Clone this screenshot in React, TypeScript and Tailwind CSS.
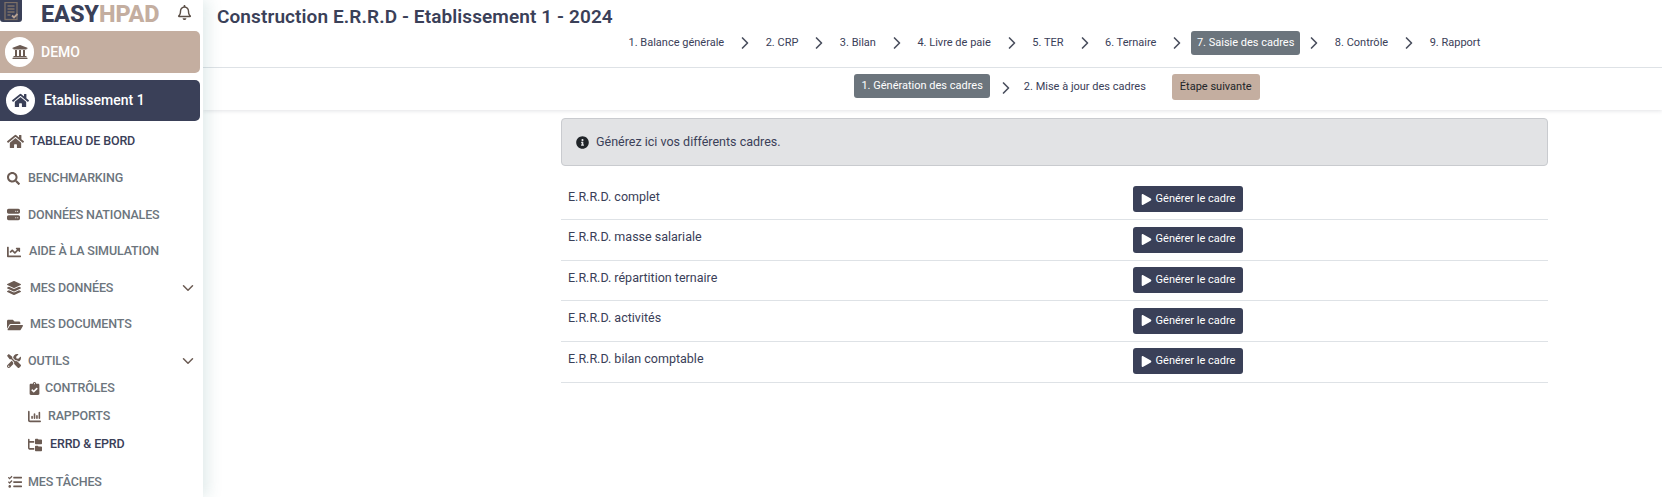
import { Fragment } from 'react';
import type { IconType } from 'react-icons';
import {
  FaChartLine,
  FaClipboardCheck,
  FaFolderOpen,
  FaHome,
  FaInfoCircle,
  FaLayerGroup,
  FaPlay,
  FaRegBell,
  FaSearch,
  FaTasks,
  FaTools,
  FaUniversity,
} from 'react-icons/fa';
import { FaChartColumn, FaFolderTree, FaServer } from 'react-icons/fa6';
import { LuChevronDown, LuChevronRight } from 'react-icons/lu';

const menu: Array<{ label: string; icon: IconType; size: number; gap: string; active?: boolean; open?: boolean }> = [
  { label: 'TABLEAU DE BORD', icon: FaHome, size: 17, gap: 'gap-[6px]', active: true },
  { label: 'BENCHMARKING', icon: FaSearch, size: 13, gap: 'gap-[8px]' },
  { label: 'DONNÉES NATIONALES', icon: FaServer, size: 13, gap: 'gap-[8px]' },
  { label: 'AIDE À LA SIMULATION', icon: FaChartLine, size: 14, gap: 'gap-[8px]' },
  { label: 'MES DONNÉES', icon: FaLayerGroup, size: 14, gap: 'gap-[9px]', open: true },
  { label: 'MES DOCUMENTS', icon: FaFolderOpen, size: 16, gap: 'gap-[7px]' },
  { label: 'OUTILS', icon: FaTools, size: 14, gap: 'gap-[7px]', open: true },
];

const subMenu: Array<{ label: string; icon: IconType; size: number; gap: string; active?: boolean }> = [
  { label: 'CONTRÔLES', icon: FaClipboardCheck, size: 13, gap: 'gap-[4px]' },
  { label: 'RAPPORTS', icon: FaChartColumn, size: 13, gap: 'gap-[7px]' },
  { label: 'ERRD & EPRD', icon: FaFolderTree, size: 14, gap: 'gap-[8px]', active: true },
];

const steps = ['1. Balance générale', '2. CRP', '3. Bilan', '4. Livre de paie', '5. TER', '6. Ternaire', '7. Saisie des cadres', '8. Contrôle', '9. Rapport'];
const cadres = ['E.R.R.D. complet', 'E.R.R.D. masse salariale', 'E.R.R.D. répartition ternaire', 'E.R.R.D. activités', 'E.R.R.D. bilan comptable'];

function Logo() {
  return (
    <div className="flex h-[22px] w-[22px] items-center justify-center rounded-b-[3px] bg-[#3a4058]">
      <svg width="15" height="19" viewBox="0 0 15 19" fill="none" stroke="#7d7067" strokeWidth="1.3">
        <rect x="1" y="0.5" width="12" height="17" />
        <path d="M3.5 4h7M3.5 7h7M3.5 10h7M3.5 13h3" />
        <path d="M8 13.5l2 2 3.5-3.5" stroke="#b9a395" strokeWidth="1.8" />
      </svg>
    </div>
  );
}

function Sidebar() {
  return (
    <aside className="relative z-10 h-full w-[203px] shrink-0 bg-white shadow-[5px_0_14px_rgba(70,130,130,0.16)]">
      <div className="flex h-[31px] items-start">
        <Logo />
        <div className="ml-[19px] w-[122px] text-[23.5px] leading-[28px] font-extrabold tracking-[-0.1px]">
          <span className="text-[#3a4058]">EASY</span>
          <span className="text-[#c4aea0]">HPAD</span>
        </div>
        <FaRegBell size={15} className="ml-[14px] mt-[5px] text-[#5c5048]" />
      </div>

      <div className="flex h-[42px] w-[200px] items-center rounded-r-[5px] bg-[#c4aea0] pl-[5px]">
        <div className="flex h-[30px] w-[29px] items-center justify-center rounded-full bg-white text-[#6b5b53]">
          <FaUniversity size={16} />
        </div>
        <span className="ml-[7px] text-[14px] font-medium text-white">DEMO</span>
      </div>

      <div className="mt-[7px] flex h-[41px] w-[200px] items-center rounded-r-[5px] bg-[#3a4058] pl-[6px]">
        <div className="flex h-[29px] w-[29px] items-center justify-center rounded-full bg-white text-[#3a4058]">
          <FaHome size={17} />
        </div>
        <span className="ml-[9px] text-[14px] font-medium text-white">Etablissement 1</span>
      </div>

      <nav className="pt-[2.5px]">
        {menu.map((m) => (
          <div key={m.label} className={`flex h-[36.6px] items-center pl-[7px] pr-[6px] ${m.gap}`}>
            <m.icon size={m.size} className="shrink-0 text-[#6b5b53]" />
            <span className={`text-[12.5px] font-medium tracking-[-0.15px] ${m.active ? 'text-[#3a4058]' : 'text-[#6c757d]'}`}>{m.label}</span>
            {m.open && <LuChevronDown size={18} className="ml-auto text-[#6b5b53]" />}
          </div>
        ))}
        <div className="-mt-[5px]">
          {subMenu.map((m) => (
            <div key={m.label} className={`flex h-[28px] items-center pl-[28px] ${m.gap}`}>
              <m.icon size={m.size} className="shrink-0 text-[#6b5b53]" />
              <span className={`text-[12.5px] font-medium tracking-[-0.15px] ${m.active ? 'text-[#3a4058]' : 'text-[#6c757d]'}`}>{m.label}</span>
            </div>
          ))}
        </div>
        <div className="mt-[5px] flex h-[36.6px] items-center gap-[6px] pl-[8px]">
          <FaTasks size={14} className="shrink-0 text-[#6b5b53]" />
          <span className="text-[12.5px] font-medium tracking-[-0.15px] text-[#6c757d]">MES TÂCHES</span>
        </div>
      </nav>
    </aside>
  );
}

function Header() {
  return (
    <header className="bg-white shadow-[0_1px_4px_rgba(60,64,88,0.15)]">
      <div className="h-[68px] border-b border-[#dee2e6]">
        <h1 className="pl-[14px] pt-[5px] text-[19px] leading-[24px] font-semibold tracking-[0.1px] text-[#3a4058]">Construction E.R.R.D - Etablissement 1 - 2024</h1>
        <div className="ml-[358px] mr-[114px] mt-[2px] flex h-[24px] items-center justify-center">
          {steps.map((s, i) => (
            <Fragment key={s}>
              {i > 0 && <LuChevronRight size={20} className="ml-[11px] mr-[10.5px] shrink-0 text-[#4a4f5e]" />}
              {s.startsWith('7.') ? (
                <span className="-mx-[7px] rounded-[3px] bg-[#6c757d] px-[6px] py-[4px] text-[11px] leading-[16px] text-white">{s}</span>
              ) : (
                <span className="text-[11px] leading-[16px] text-[#3a4058]">{s}</span>
              )}
            </Fragment>
          ))}
        </div>
      </div>
      <div className="h-[42px] pt-[6px]">
        <div className="ml-[358px] mr-[114px] flex items-start justify-center pl-[5px]">
          <span className="rounded-[3px] bg-[#6c757d] px-[7px] py-[4px] text-[11px] leading-[16px] text-white">1. Génération des cadres</span>
          <LuChevronRight size={20} className="ml-[6px] mr-[8px] mt-[4px] shrink-0 text-[#4a4f5e]" />
          <span className="mt-[5px] text-[11px] leading-[16px] text-[#3a4058]">2. Mise à jour des cadres</span>
          <span className="ml-[26px] rounded-[3px] bg-[#c4aea0] px-[8px] py-[5px] text-[11px] leading-[16px] text-[#212529]">Étape suivante</span>
        </div>
      </div>
    </header>
  );
}

function Cadres() {
  return (
    <div className="ml-[358px] mr-[114px] pt-[8px]">
      <div className="flex h-[48px] items-center rounded-[4px] border border-[#c9cbcf] bg-[#e2e3e5] pl-[14px] text-[12.5px] text-[#3a4058]">
        <FaInfoCircle size={13} className="mr-[7px] text-[#212529]" />
        Générez ici vos différents cadres.
      </div>
      {cadres.map((c, i) => (
        <div key={c} className={`flex h-[40.6px] border-b border-[#dee2e6] pl-[7px] ${i === 0 ? 'mt-[13.6px]' : ''}`}>
          <span className="w-[565px] pt-[8px] text-[12.5px] leading-[18px] text-[#3a4058]">{c}</span>
          <button className="mt-[6.5px] flex h-[26px] w-[110px] items-center justify-center gap-[4px] rounded-[3px] bg-[#3a4058] text-[11px] text-white">
            <FaPlay size={11} />
            Générer le cadre
          </button>
        </div>
      ))}
    </div>
  );
}

export default function App() {
  return (
    <div className="flex h-[497px] w-[1662px] overflow-hidden bg-white font-['Roboto',sans-serif]">
      <Sidebar />
      <main className="min-w-0 flex-1">
        <Header />
        <Cadres />
      </main>
    </div>
  );
}
